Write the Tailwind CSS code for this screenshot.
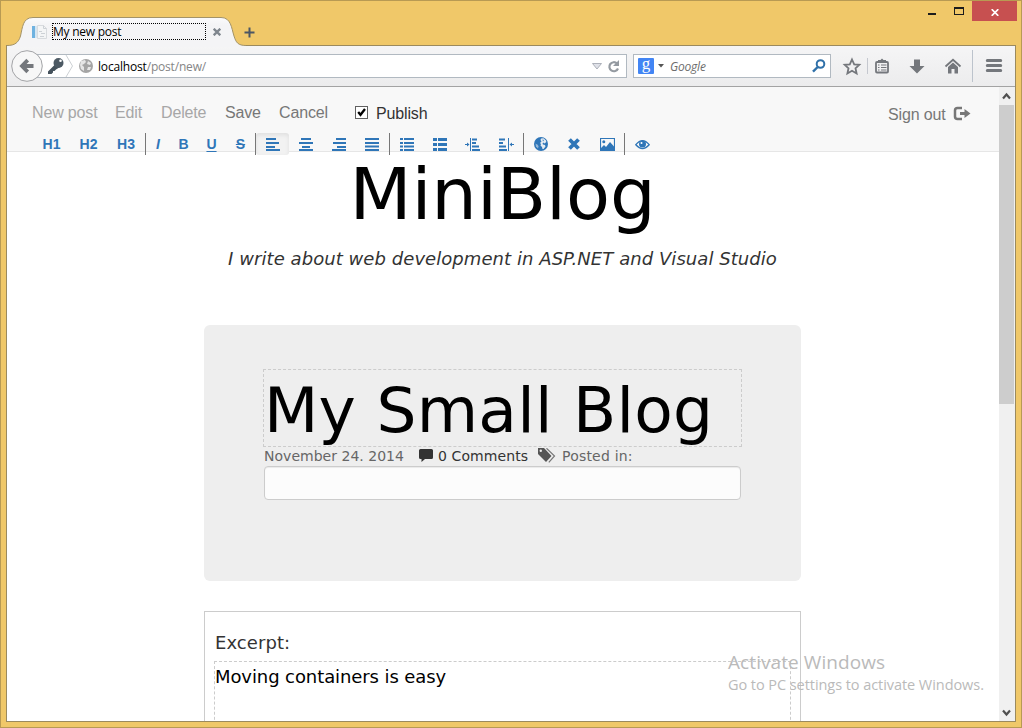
<!DOCTYPE html>
<html lang="en">
<head>
<meta charset="utf-8">
<title>My new post</title>
<script src="https://cdn.jsdelivr.net/npm/@tailwindcss/browser@4"></script>
</head>
<body class="h-[728px] w-[1022px] overflow-hidden bg-[#f0c869]">
<div class="relative flex h-[728px] w-[1022px] flex-col border border-[#b89a53] font-['Open_Sans','Noto_Sans',sans-serif] text-black">

  <!-- Title bar -->
  <div class="flex h-[44px] shrink-0 justify-between">
    <div class="relative flex h-[45px] w-[260px] items-start pt-[22px] pl-[31px]">
      <svg class="absolute top-[15px] left-[5px] z-10" width="240" height="31" viewBox="6 16 240 31">
        <defs><linearGradient id="tab" x1="0" y1="0" x2="0" y2="1"><stop offset="0" stop-color="#fbfbfc"/><stop offset=".25" stop-color="#f4f4f6"/><stop offset="1" stop-color="#f4f4f6"/></linearGradient></defs>
        <path d="M7 47V45.5C15 45.5 18.500 42.500 20.500 36C22.500 28 22.500 17.500 33 17.500H221C231 17.500 231.500 28 234 36C236 42.500 238 45.500 246 45.500V47Z" fill="url(#tab)"/>
        <path d="M7 45.500C15 45.500 18.500 42.500 20.500 36C22.500 28 22.500 17.500 33 17.500H221C231 17.500 231.500 28 234 36C236 42.500 238 45.500 246 45.500" fill="none" stroke="#a39368"/>
      </svg>
      <svg class="z-20 mt-[1px] shrink-0" width="16" height="16" viewBox="0 0 16 16"><path d="M0 2H3V14H0Z" fill="#6fb2e0"/><path d="M3 2H5V14H3Z" fill="#d6e6f2"/><path d="M5.500 1.500H11.500L14.500 4.500V14.500H5.500Z" fill="#f4f5f6" stroke="#d8dbde"/><path d="M11.500 1.500V4.500H14.500M7 7.500H10M9 9.500H13M8 12.500H12" fill="none" stroke="#cdd1d6"/></svg>
      <div class="z-20 ml-[4px] h-[17px] w-[154px] border border-dotted border-black text-[12px] leading-[16px] tracking-[-0.250px]">My new post</div>
      <svg class="z-20 mt-[5px] ml-[7px]" width="8" height="8" viewBox="0 0 8 8"><path d="M.7.700L7.300 7.300M7.300.700L.7 7.300" stroke="#7f868e" stroke-width="2.300"/></svg>
      <svg class="z-20 mt-[4px] ml-[23px]" width="11" height="11" viewBox="0 0 11 11"><path d="M5.500 .5V10.500M.5 5.500H10.500" stroke="#4b5664" stroke-width="2"/></svg>
    </div>
    <div class="flex">
      <svg class="mt-[6px] mr-[7px]" width="37" height="10" viewBox="0 0 37 10"><path d="M0 6H8V8H0Z" fill="#1c1c1c"/><path fill-rule="evenodd" d="M26 0H36V8H26ZM27 2V7H35V2Z" fill="#1c1c1c"/></svg>
      <div class="mr-[4px] flex h-[20px] w-[45px] items-center justify-center bg-[#c75050] pt-[2px]">
        <svg width="8" height="7" viewBox="0 0 8 7"><path d="M.7.200L7.300 6.800M7.300.200L.7 6.800" stroke="#fff" stroke-width="1.700"/></svg>
      </div>
    </div>
  </div>

  <!-- Browser frame -->
  <div class="mx-[5px] flex h-[677px] shrink-0 flex-col border border-[#9b8a5e] bg-white">
    <!-- Navigation toolbar -->
    <div class="flex h-[41px] shrink-0 items-start border-b border-[#a3a3a3] bg-linear-to-b from-[#f5f5f6] to-[#ececed] pt-[4px] pl-[4px]">
      <svg class="z-10 shrink-0" width="32" height="32" viewBox="0 0 32 32"><circle cx="16" cy="16" r="15.300" fill="#f7f7f7" stroke="#a2a3a6" stroke-width="1"/><path d="M16.700 10.200L11 16L16.700 21.800M11 16H22.500" fill="none" stroke="#74777c" stroke-width="3.800"/></svg>
      <div class="mt-[4px] -ml-[6px] flex h-[24px] w-[590px] shrink-0 items-center border border-[#b1b9c1] bg-white">
        <svg class="ml-[8px] shrink-0" width="28" height="22" viewBox="46 55 28 22"><path d="M55.500 64L48 71.500V74H51.500L53 72.500V71H54.500L56 69.500L60 67" fill="#45525c"/><circle cx="58.500" cy="63" r="5" fill="#4d5a64"/><circle cx="60.500" cy="60.800" r="1.300" fill="#fff"/><path d="M66 55L72.500 66L66 77" fill="none" stroke="#ccd0d4"/></svg>
        <svg class="ml-[4px] shrink-0" width="16" height="16" viewBox="0 0 16 16"><circle cx="8" cy="8" r="7" fill="#a5a5a5"/><path d="M3 3L7 2L8 4L6 6L4 7L6 9L6 13L3 11L2 7ZM10 3L13 5L12 7L9 6ZM10 9L13 9L12 12L9 12Z" fill="#e6e6e6"/></svg>
        <div class="mt-[2px] ml-[4px] w-[492px] text-[12px] leading-[16px] tracking-[-0.180px] text-[#858585]"><span class="text-black">localhost</span>/post/new/</div>
        <svg class="shrink-0" width="32" height="14" viewBox="0 0 32 14"><path d="M2.500 4.500H11.500L7 10Z" fill="#dfe1e8" stroke="#adb1ba"/><path d="M27 4.500A4.500 4.500 0 1 0 28 9.500" fill="none" stroke="#949aa1" stroke-width="2.200"/><path d="M29 1V7H23Z" fill="#949aa1"/></svg>
      </div>
      <div class="mt-[4px] ml-[6px] flex h-[24px] w-[198px] shrink-0 items-center border border-[#b1b9c1] bg-white pl-[4px]">
        <div class="flex h-[16px] w-[16px] items-center justify-center rounded-[1px] bg-[#4285f4] pb-[4px] font-['Liberation_Serif',serif] text-[17px] leading-[14px] text-white">g</div>
        <svg class="ml-[4px]" width="6" height="4" viewBox="0 0 6 4"><path d="M0 0H6L3 3.500Z" fill="#555"/></svg>
        <div class="mt-[2px] ml-[6px] w-[142px] text-[12px] leading-[16px] tracking-[-0.200px] text-[#6d6d6d] italic">Google</div>
        <svg class="shrink-0" width="14" height="14" viewBox="0 0 14 14"><circle cx="8.500" cy="5" r="3.800" fill="none" stroke="#2f70a8" stroke-width="2"/><path d="M5.700 8L1 12.700" stroke="#2f70a8" stroke-width="2.400"/></svg>
      </div>
      <svg class="shrink-0" width="184" height="37" viewBox="831 50 184 37">
        <path d="M852 59.500L854.200 64.300L859.300 64.800L855.500 68.300L856.600 73.500L852 70.800L847.400 73.500L848.500 68.300L844.700 64.800L849.800 64.300Z" fill="none" stroke="#74777c" stroke-width="1.800"/>
        <path d="M867.500 58V74" stroke="#c5c8cf"/>
        <rect x="876" y="62" width="12" height="10.500" rx="1" fill="none" stroke="#74777c" stroke-width="1.800"/><path d="M878 61V60H880.500L882 58.500L883.500 60H886V61Z" fill="#74777c"/><path d="M878 65H879.500M881 65H886.500M878 67.500H879.500M881 67.500H886.500M878 70H879.500M881 70H886.500" stroke="#74777c" stroke-width="1"/>
        <path d="M914 59.500H920V66H924.500L917 73.500L909.500 66H914Z" fill="#74777c"/>
        <path d="M945.500 66.500L953 59.800L960.500 66.500" fill="none" stroke="#74777c" stroke-width="1.800"/><path d="M953 62.500L958 67V73.500H954.500V69H951.500V73.500H948V67Z" fill="#74777c"/>
        <path d="M972.500 48V82" stroke="#bcc3cc"/>
        <path d="M987.300 60.500H1000.700M987.300 65.500H1000.700M987.300 70.500H1000.700" stroke="#74777c" stroke-width="3" stroke-linecap="round"/>
      </svg>
    </div>

    <div class="flex h-[634px]">
      <!-- Page -->
      <div class="flex h-[634px] w-[992px] shrink-0 flex-col overflow-hidden bg-white">
        <header class="flex h-[65px] shrink-0 flex-col border-b border-[#e6e6e6] bg-[#f8f8f8] font-['Liberation_Sans',Arial,sans-serif]">
          <nav class="flex h-[46px] shrink-0 pt-[16px] pl-[25px] text-[16px] leading-[20px] tracking-[-0.150px] whitespace-nowrap text-[#777]">
            <span class="w-[83px] text-[#a7a7a7]">New post</span>
            <span class="w-[46px] text-[#a7a7a7]">Edit</span>
            <span class="w-[64px] text-[#a7a7a7]">Delete</span>
            <span class="w-[54px]">Save</span>
            <span class="w-[76px]">Cancel</span>
            <svg class="mt-[3px] shrink-0" width="13" height="13" viewBox="0 0 13 13"><rect x=".5" y=".5" width="12" height="12" fill="#fff" stroke="#606060"/><path d="M3.200 6L5.500 8.800L10 3" fill="none" stroke="#000" stroke-width="2.300"/></svg>
            <span class="mt-px ml-[8px] w-[512px] text-[#333]">Publish</span>
            <span class="mt-[2px] w-[65px]">Sign out</span>
            <svg class="mt-[3px] shrink-0" width="18" height="16" viewBox="0 0 18 16"><path d="M9 2H4.500Q2 2 2 4.500V10.500Q2 13 4.500 13H9" fill="none" stroke="#777" stroke-width="2.500"/><path d="M7 6H11.500V3L17.500 7.500L11.500 12V9H7Z" fill="#777"/></svg>
          </nav>
          <div class="z-10 flex h-[22px] shrink-0 pl-[26px] text-center text-[14px] leading-[22px] font-bold text-[#2f76b8]">
            <div class="flex border-r border-[#777]"><span class="w-[37px]">H1</span><span class="w-[37px]">H2</span><span class="w-[38px]">H3</span></div>
            <div class="flex border-r border-[#777]"><span class="w-[24px] italic">I</span><span class="w-[27px]">B</span><span class="w-[29px] underline underline-offset-2">U</span><span class="w-[29px] line-through">S</span></div>
            <div class="flex border-r border-[#777]">
              <span class="flex w-[33px] items-center justify-center rounded-[3px] bg-[#f2f2f2] shadow-[inset_0_2px_4px_rgba(0,0,0,0.08)]"><svg width="14" height="13" viewBox="0 0 14 13"><path d="M0 1H10M0 5H13M0 9H9M0 12H14" stroke="currentColor" stroke-width="2"/></svg></span>
              <span class="flex w-[33px] items-center justify-center"><svg width="14" height="13" viewBox="0 0 14 13"><path d="M2 1H12M0 5H14M3 9H11M0 12H14" stroke="currentColor" stroke-width="2"/></svg></span>
              <span class="flex w-[33px] items-center justify-center"><svg width="14" height="13" viewBox="0 0 14 13"><path d="M4 1H14M1 5H14M5 9H14M0 12H14" stroke="currentColor" stroke-width="2"/></svg></span>
              <span class="flex w-[34px] items-center justify-center"><svg width="14" height="13" viewBox="0 0 14 13"><path d="M0 1H14M0 5H14M0 8.500H14M0 12H14" stroke="currentColor" stroke-width="2"/></svg></span>
            </div>
            <div class="flex border-r border-[#777]">
              <span class="flex w-[33px] items-center justify-center"><svg width="14" height="13" viewBox="0 0 14 13"><path d="M0 1H3M0 5H3M0 8.500H3M0 12H3M4 1H14M4 5H14M4 8.500H14M4 12H14" stroke="currentColor" stroke-width="2"/></svg></span>
              <span class="flex w-[33px] items-center justify-center"><svg width="14" height="13" viewBox="0 0 14 13"><path d="M0 1.500H4M0 6.500H4M0 11.500H4M5 1.500H14M5 6.500H14M5 11.500H14" stroke="currentColor" stroke-width="3.200"/></svg></span>
              <span class="flex w-[33px] items-center justify-center"><svg width="15" height="13" viewBox="0 0 15 13"><path d="M0 6.500H4M5.500 0V13" stroke="currentColor" stroke-width="1"/><path d="M2 4.500L4.500 6.500L2 8.500Z" fill="currentColor"/><path d="M7 1.500H12M7 5H11M7 8.500H14M7 12H15" stroke="currentColor" stroke-width="1.800"/></svg></span>
              <span class="flex w-[34px] items-center justify-center"><svg width="15" height="13" viewBox="0 0 15 13"><path d="M11 6.500H15M9.500 0V13" stroke="currentColor" stroke-width="1"/><path d="M13 4.500L10.500 6.500L13 8.500Z" fill="currentColor"/><path d="M0 1.500H6M0 5H4M0 8.500H7M0 12H8" stroke="currentColor" stroke-width="1.800"/></svg></span>
            </div>
            <div class="flex border-r border-[#777]">
              <span class="flex w-[33px] items-center justify-center"><svg width="14" height="14" viewBox="0 0 14 14"><circle cx="7" cy="7" r="7" fill="currentColor"/><path d="M7 1.500L9.500 1.200L12 3.500L12.300 5L10.500 6.500L9.500 5.500L8.500 6.500L9 7.500L11 8L11.500 9.500L9.500 12L8.500 12L8 10L6.500 8.500L7 7L6 6L7.500 4.500L6.500 3Z" fill="#f8f8f8" opacity=".9"/><path d="M1.500 6.500L4 8L4.500 9.500L4 11.500L2 9.500Z" fill="#f8f8f8" opacity=".5"/><path d="M8.500 2.500L10 3L9 4.500Z" fill="currentColor"/></svg></span>
              <span class="flex w-[33px] items-center justify-center"><svg width="12" height="12" viewBox="0 0 12 12"><path d="M1.500 1.500L10.500 10.500M10.500 1.500L1.500 10.500" stroke="currentColor" stroke-width="3.800"/></svg></span>
              <span class="flex w-[34px] items-center justify-center"><svg width="15" height="13" viewBox="0 0 15 13"><path d="M.5.500H14.500V12.500H.5Z" fill="#f8f8f8" stroke="currentColor" stroke-width="1.200"/><circle cx="3.800" cy="3.800" r="1.500" fill="currentColor"/><path d="M1 12V10L4 7L6 9L10 4L14 8.500V12Z" fill="currentColor"/></svg></span>
            </div>
            <span class="flex w-[34px] items-center justify-center pt-px"><svg width="15" height="12" viewBox="0 0 15 12"><path d="M.8 5.700Q7.500-2.600 14.200 5.700Q7.500 13.400.8 5.700Z" fill="#f8f8f8" stroke="currentColor" stroke-width="1.300"/><circle cx="7.500" cy="5" r="3.500" fill="currentColor"/><circle cx="6.500" cy="4" r="1" fill="#fff"/></svg></span>
          </div>
        </header>

        <main class="ml-[197px] flex w-[597px] flex-col self-start font-['DejaVu_Sans',Verdana,sans-serif] text-[#333]">
          <h1 class="h-[84px] text-center text-[72px] leading-[84px] tracking-[-0.100px] whitespace-nowrap text-black">MiniBlog</h1>
          <p class="mt-[11px] h-[24px] text-center text-[18px] leading-[24px] tracking-[0.060px] whitespace-nowrap italic">I write about web development in ASP.NET and Visual Studio</p>

          <section class="mt-[54px] h-[256px] shrink-0 rounded-[6px] bg-[#eee] px-[59px] pt-[44px]">
            <h2 class="h-[78px] w-[479px] border border-dashed border-[#ccc] text-[63px] leading-[82px] tracking-[0.250px] whitespace-nowrap text-black">My Small Blog</h2>
            <div class="flex h-[19px] pl-px text-[14px] leading-[18px] whitespace-nowrap text-[#666]">
              <span class="w-[154px] tracking-[0.020px]">November 24. 2014</span>
              <svg class="mt-[2px] ml-px shrink-0" width="15" height="14" viewBox="0 0 15 14"><path d="M1.500 0H12.500Q14 0 14 1.500V8.500Q14 10 12.500 10H6L2.500 13V10H1.500Q0 10 0 8.500V1.500Q0 0 1.500 0Z" fill="#333"/></svg>
              <span class="ml-[4px] w-[100px] tracking-[0.100px] text-[#333]">0 Comments</span>
              <svg class="mt-px shrink-0" width="18" height="15" viewBox="0 0 18 15"><path d="M0 0H6L13.500 8L8 14L0 6Z" fill="#555"/><circle cx="2.800" cy="2.800" r="1.200" fill="#eee"/><path d="M8.500 .3L16.500 8L10.800 14.300" fill="none" stroke="#777" stroke-width="1.200"/></svg>
              <span class="ml-[6px] tracking-[0.200px]">Posted in:</span>
            </div>
            <div class="ml-px h-[34px] w-[477px] rounded-[4px] border border-[#ccc] bg-[#fcfcfc] shadow-[inset_0_1px_1px_rgba(0,0,0,0.075)]"></div>
          </section>

          <section class="mt-[30px] h-[200px] shrink-0 border border-[#ccc] px-[9px] pt-[19px] text-[18px]">
            <div class="h-[30px] pl-px leading-[24px] tracking-[0.080px]">Excerpt:</div>
            <div class="h-[140px] w-[577px] border border-dashed border-[#ccc] pt-[3px] leading-[24px] tracking-[-0.090px] text-black">Moving containers is easy</div>
          </section>
        </main>
      </div>

      <!-- Scrollbar -->
      <div class="flex h-[634px] w-[16px] shrink-0 flex-col justify-between bg-[#f0f0f0]">
        <div class="flex flex-col">
          <svg width="16" height="18" viewBox="0 0 16 18"><path d="M4 11.500L7.500 7.500L11 11.500" fill="none" stroke="#505050" stroke-width="2.200"/></svg>
          <div class="h-[299px] w-[15px] bg-[#cdcdcd]"></div>
        </div>
        <svg width="16" height="17" viewBox="0 0 16 17"><path d="M4 6.500L7.500 10.500L11 6.500" fill="none" stroke="#505050" stroke-width="2.200"/></svg>
      </div>
    </div>
  </div>

  <!-- Desktop watermark -->
  <div class="absolute top-[647px] left-[727px] z-30 whitespace-nowrap text-[#bababa]">
    <div class="text-[19px] leading-[28px] tracking-[0.080px]">Activate Windows</div>
    <div class="text-[14.500px] leading-[18px] tracking-[-0.060px]">Go to PC settings to activate Windows.</div>
  </div>
</div>
</body>
</html>
